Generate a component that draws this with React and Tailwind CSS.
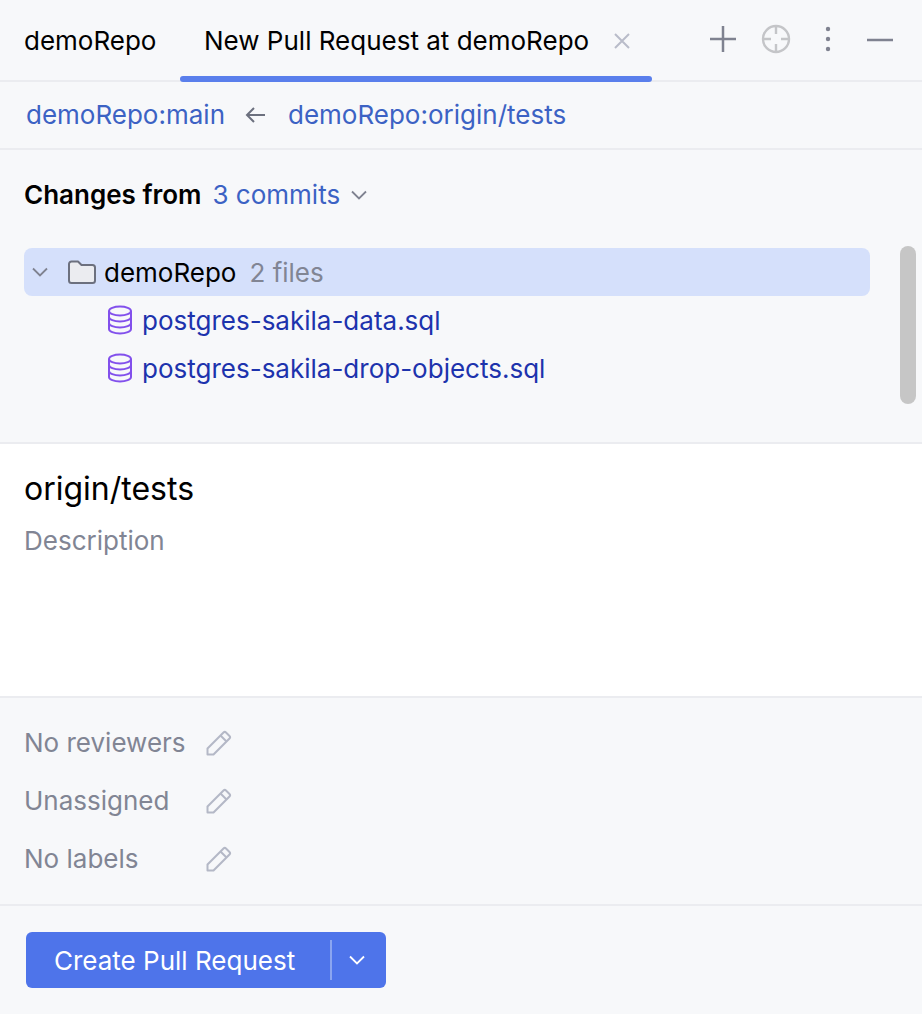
import React from "react";

const Pencil = () => (
  <svg width="28" height="28" viewBox="0 0 28 28" fill="none" stroke="#b4b8c6" strokeWidth="2" strokeLinejoin="round">
    <path d="M2.5 20.5 18.5 4.5a1.8 1.8 0 0 1 2.5 0l3.5 3.500a1.800 1.800 0 0 1 0 2.500L8.500 26.500H2.500Z" />
    <path d="M15.500 7.500 21.500 13.500" />
  </svg>
);

const DbIcon = () => (
  <svg width="26" height="30" viewBox="0 0 26 30" fill="none" stroke="#8250ec" strokeWidth="2">
    <ellipse cx="13" cy="6" rx="11" ry="4.500" />
    <path d="M2 6v18c0 2.500 5 4.500 11 4.500s11-2 11-4.500V6" />
    <path d="M2 12c0 2.500 5 4.500 11 4.500s11-2 11-4.500" />
    <path d="M2 18c0 2.500 5 4.500 11 4.500s11-2 11-4.500" />
  </svg>
);

const Chevron = ({ color = "#6c707e", size = 18 }) => (
  <svg width={size} height={size} viewBox="0 0 18 18" fill="none" stroke={color} strokeWidth="1.800">
    <path d="M2 5.500 9 12.500 16 5.500" />
  </svg>
);

const files = ["postgres-sakila-data.sql", "postgres-sakila-drop-objects.sql"];
const meta = ["No reviewers", "Unassigned", "No labels"];

const App = () => {
  return (
    <div className="w-[922px] h-[1014px] flex flex-col bg-[#f7f8fa] overflow-hidden text-[26px] leading-[32px] text-black font-['Inter',sans-serif]">
      {/* tabs */}
      <div className="h-[82px] shrink-0 flex border-b-2 border-[#ebecf0] pl-6">
        <div className="w-[156px] pt-[9px] h-[80px] flex items-center pb-[8px]">demoRepo</div>
        <div className="relative w-[472px] h-[82px] flex items-center pl-6 pb-[1px]">
          <span>New Pull Request at demoRepo</span>
          <svg className="ml-[24px] mt-[1px]" width="18" height="18" viewBox="0 0 18 18" stroke="#b9bcc9" strokeWidth="2">
            <path d="M2 2 16 16M16 2 2 16" />
          </svg>
          <div className="absolute left-0 right-0 bottom-0 h-[6px] rounded-[3px] bg-[#5a7fec]" />
        </div>
        <div className="flex items-center pb-[3px] ml-[58px]">
          <svg width="26" height="26" viewBox="0 0 26 26" stroke="#7f8290" strokeWidth="2.500">
            <path d="M13 0v26M0 13h26" />
          </svg>
          <svg className="ml-[25px] mt-[1px]" width="30" height="30" viewBox="0 0 30 30" fill="none" stroke="#c4c5c8" strokeWidth="2.400">
            <circle cx="15" cy="15" r="13" />
            <path d="M15 2v8M15 20v8M2 15h8M20 15h8" />
          </svg>
          <svg width="8" height="26" viewBox="0 0 8 26" fill="#7f8290" className="ml-[33px] mt-[1px]">
            <circle cx="4" cy="3" r="2.200" />
            <circle cx="4" cy="13" r="2.200" />
            <circle cx="4" cy="23" r="2.200" />
          </svg>
          <svg className="ml-[35px] mt-[2px]" width="26" height="4" viewBox="0 0 26 4" stroke="#7f8290" strokeWidth="2.500">
            <path d="M0 2h26" />
          </svg>
        </div>
      </div>

      {/* branches */}
      <div className="h-[68px] shrink-0 flex items-center pl-[26px] border-b-2 border-[#ebecf0] text-[#3c62c4]">
        <span>demoRepo:main</span>
        <svg className="ml-[20px] mr-[22px]" width="21" height="18" viewBox="0 0 21 18" fill="none" stroke="#6c707e" strokeWidth="2">
          <path d="M20 9H2M9 2 2 9l7 7" />
        </svg>
        <span>demoRepo:origin/tests</span>
      </div>

      {/* changes */}
      <div className="relative h-[294px] shrink-0 border-b-2 border-[#ebecf0] pt-[29px] pl-6">
        <div className="flex items-center h-8">
          <span className="font-semibold">Changes from</span>
          <span className="ml-[11px] text-[#3c62c4]">3 commits</span>
          <span className="ml-[10px]"><Chevron color="#7f8290" /></span>
        </div>
        <div className="mt-[37px] w-[846px]">
          <div className="h-12 flex items-center rounded-[8px] bg-[#d5e0fb] pl-[7px]">
            <Chevron color="#7f8290" />
            <svg className="ml-[19px]" width="28" height="24" viewBox="0 0 28 24" fill="#ebecf0" stroke="#6c707e" strokeWidth="2" strokeLinejoin="round">
              <path d="M1 4a2.500 2.500 0 0 1 2.500-2.500h6.500l3.500 3.500h11A2.500 2.500 0 0 1 27 7.500v13a2.500 2.500 0 0 1-2.500 2.500h-21A2.500 2.500 0 0 1 1 20.500Z" />
            </svg>
            <span className="ml-[8px] mt-[2px]">demoRepo</span>
            <span className="ml-[13px] mt-[2px] text-[#818594]">2 files</span>
          </div>
          {files.map((file) => (
            <div key={file} className="h-12 flex items-center pl-[83px] text-[#1d33ad]">
              <DbIcon />
              <span className="ml-[9px] mt-[2px]">{file}</span>
            </div>
          ))}
        </div>
        <div className="absolute right-[6px] top-[96px] w-4 h-[158px] rounded-full bg-[#c6c6c6]" />
      </div>

      {/* title and description */}
      <div className="h-[252px] shrink-0 bg-white pl-6 pt-[27px]">
        <div className="text-[32px] leading-[36px]">origin/tests</div>
        <div className="mt-[18px] text-[#818594]">Description</div>
      </div>

      {/* reviewers etc */}
      <div className="h-[210px] shrink-0 border-y-2 border-[#ebecf0] pl-6 pt-[15px] text-[#818594]">
        {meta.map((label) => (
          <div key={label} className="h-[58px] flex items-center">
            <span className="w-[181px] mt-[1px]">{label}</span>
            <Pencil />
          </div>
        ))}
      </div>

      {/* footer */}
      <div className="flex-1 pl-[26px] pt-[26px]">
        <div className="w-[360px] h-[56px] rounded-[6px] bg-[#4e74ea] text-white flex items-center">
          <span className="pl-[28px] w-[304px] mt-[2px]">Create Pull Request</span>
          <div className="w-[2px] h-10 bg-[#8ba5f0]" />
          <span className="ml-[16px]"><Chevron color="#ffffff" /></span>
        </div>
      </div>
    </div>
  );
};

export default App;
